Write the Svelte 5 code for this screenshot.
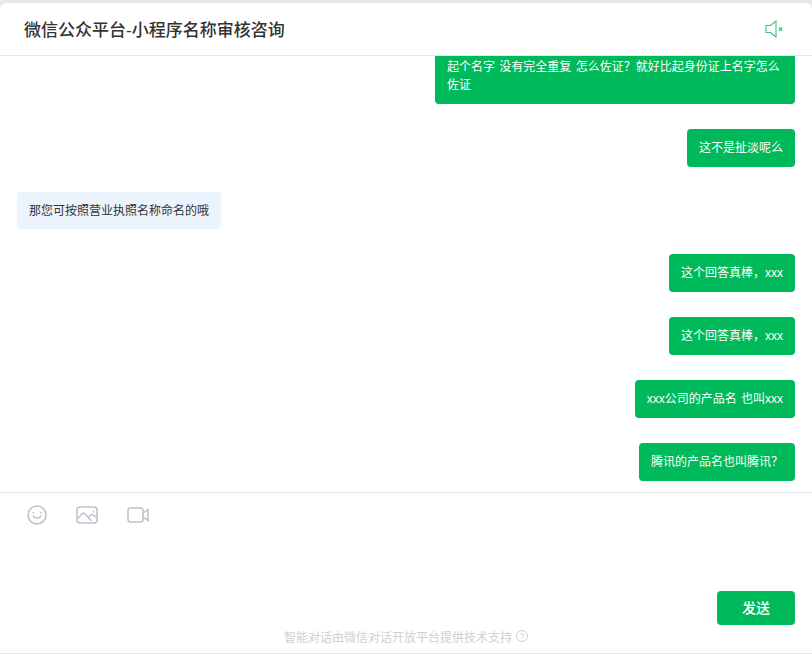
<script lang="ts">
	type Msg = { id: number; from: 'me' | 'bot'; text: string };

	const messages: Msg[] = [
		{ id: 1, from: 'me', text: '起个名字 没有完全重复 怎么佐证？就好比起身份证上名字怎么佐证' },
		{ id: 2, from: 'me', text: '这不是扯淡呢么' },
		{ id: 3, from: 'bot', text: '那您可按照营业执照名称命名的哦' },
		{ id: 4, from: 'me', text: '这个回答真棒，xxx' },
		{ id: 5, from: 'me', text: '这个回答真棒，xxx' },
		{ id: 6, from: 'me', text: 'xxx公司的产品名 也叫xxx' },
		{ id: 7, from: 'me', text: '腾讯的产品名也叫腾讯？' }
	];
</script>

<div class="page">
	<main class="chat">
		<header>
			<h1>微信公众平台-小程序名称审核咨询</h1>
			<svg class="mute" width="19" height="18" viewBox="0 0 19 18" fill="none" stroke="#3fc37c" stroke-width="1.1">
				<path d="M1 5.5h4.5L11 1v16l-5.5-4.5H1z" />
				<path d="M14 7.5l3.2 3.2M17.2 7.5L14 10.7" stroke-width="1.3" />
			</svg>
		</header>

		<section class="messages">
			{#each messages as m (m.id)}
				<div class="row {m.from}">
					<div class="bubble">{m.text}</div>
				</div>
			{/each}
		</section>

		<section class="composer">
			<div class="tools">
				<svg width="20" height="20" viewBox="0 0 20 20" fill="none" stroke="#bcc2cb" stroke-width="1.5">
					<circle cx="10" cy="10" r="9" />
					<path d="M6.2 11c1 2.6 6.6 2.6 7.6 0" stroke-linecap="round" />
					<path d="M6.2 7.6v.5M13.8 7.6v.5" stroke-linecap="round" />
				</svg>
				<svg width="22" height="18" viewBox="0 0 22 18" fill="none" stroke="#bcc2cb" stroke-width="1.5">
					<rect x="1" y="1" width="20" height="16" rx="3" />
					<path d="M1 13l5-5c1-.9 2-.9 3 0l6.5 7M12.5 11l2.5-2c.8-.6 1.6-.6 2.4 0l3.6 2.6" />
					<path d="M17.5 5v.8" stroke-linecap="round" />
				</svg>
				<svg width="22" height="16" viewBox="0 0 22 16" fill="none" stroke="#bcc2cb" stroke-width="1.5">
					<rect x="1" y="1" width="15" height="14" rx="2.5" />
					<path d="M16 6l5-3.5v11L16 10" />
				</svg>
			</div>
			<div class="actions">
				<button type="button">发送</button>
			</div>
			<footer>
				智能对话由微信对话开放平台提供技术支持
				<span class="help">?</span>
			</footer>
		</section>
	</main>
</div>

<style>
	:global(body) {
		margin: 0;
		background: #e8e8e8;
	}

	.page {
		height: 654px;
		padding: 3px 0 1px;
		box-sizing: border-box;
		font-family: 'Liberation Sans', 'Noto Sans CJK SC', sans-serif;
	}

	.chat {
		height: 650px;
		background: #fff;
		border-radius: 6px 6px 0 0;
		display: flex;
		flex-direction: column;
		overflow: hidden;
	}

	header {
		flex: none;
		height: 53px;
		box-sizing: border-box;
		padding: 0 28px 2px 24px;
		display: flex;
		align-items: center;
		justify-content: space-between;
		border-bottom: 1px solid #e6e6ea;
	}

	h1 {
		margin: 0;
		font-size: 17px;
		font-weight: 500;
		color: #333;
	}

	.mute {
		margin-top: 2px;
	}

	.messages {
		flex: none;
		height: 436px;
		box-sizing: border-box;
		padding: 0 17px 11px;
		display: flex;
		flex-direction: column;
		justify-content: flex-end;
		gap: 25px;
		overflow: hidden;
	}

	.row {
		display: flex;
		flex: none;
	}

	.row.me {
		justify-content: flex-end;
	}

	.bubble {
		max-width: 336px;
		padding: 10px 12px;
		font-size: 12px;
		line-height: 18px;
		word-spacing: 1px;
		border-radius: 4px;
	}

	.me .bubble {
		background: #00b95b;
		color: #fff;
	}

	.bot .bubble {
		padding-bottom: 9px;
		background: #ebf3fd;
		color: #333;
	}

	.composer {
		flex: 1;
		border-top: 1px solid #e2e2e6;
		display: flex;
		flex-direction: column;
	}

	.tools {
		display: flex;
		align-items: center;
		gap: 29px;
		padding: 11px 0 0 27px;
		height: 22px;
	}

	.actions {
		display: flex;
		justify-content: flex-end;
		padding: 65px 17px 0 0;
	}

	button {
		width: 78px;
		height: 34px;
		border: none;
		border-radius: 4px;
		background: #00b95b;
		color: #fff;
		font-family: inherit;
		font-size: 14px;
		font-weight: 500;
		padding: 0 0 2px;
	}

	footer {
		display: flex;
		align-items: center;
		justify-content: center;
		gap: 4px;
		margin-top: 2px;
		height: 18px;
		font-size: 12px;
		color: #cfcfcf;
	}

	.help {
		width: 10px;
		height: 10px;
		border: 1px solid #cfcfcf;
		border-radius: 50%;
		font-size: 9px;
		line-height: 10px;
		text-align: center;
	}
</style>
